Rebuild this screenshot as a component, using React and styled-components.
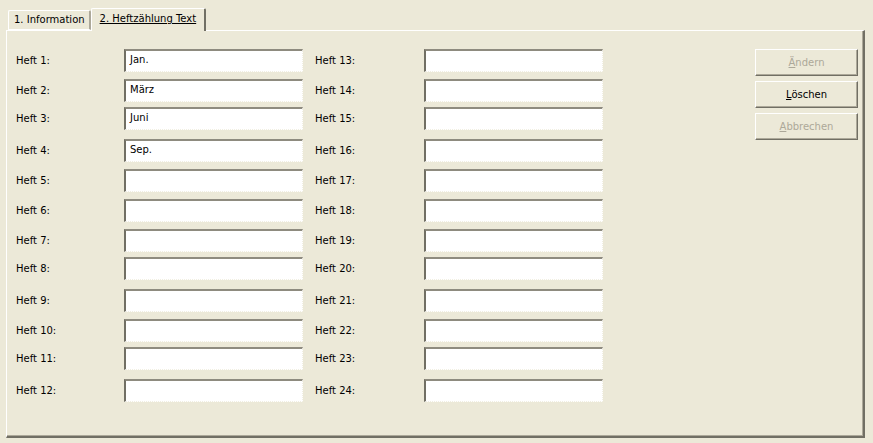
import styled, { createGlobalStyle } from 'styled-components';

const GlobalStyle = createGlobalStyle`
  html, body {
    margin: 0;
    padding: 0;
    background: #ece9d8;
    overflow: hidden;
  }
  * {
    box-sizing: border-box;
  }
`;

const Window = styled.div`
  width: 873px;
  height: 443px;
  background: #ece9d8;
  font-family: 'DejaVu Sans', 'Liberation Sans', sans-serif;
  font-size: 10px;
  color: #000;
`;

const TabStrip = styled.div`
  display: flex;
  align-items: flex-end;
  height: 30px;
  padding-left: 8px;
  position: relative;
  z-index: 1;
`;

const Tab = styled.div`
  height: ${(p) => (p.$active ? '23px' : '20px')};
  padding: ${(p) => (p.$active ? '4px 8px 0 8px' : '3px 4px 0 5px')};
  margin-bottom: ${(p) => (p.$active ? '-1px' : '0')};
  background: #ece9d8;
  border-top: 1px solid #fff;
  border-left: 1px solid #fff;
  border-right: 2px solid ${(p) => (p.$active ? '#716f64' : '#aca899')};
  border-bottom: ${(p) => (p.$active ? 'none' : '1px solid #fff')};
  border-radius: 2px 2px 0 0;
  text-decoration: ${(p) => (p.$active ? 'underline' : 'none')};
  white-space: nowrap;
`;

const Panel = styled.div`
  margin-left: 6px;
  width: 859px;
  height: 408px;
  border-top: 1px solid #fff;
  border-left: 1px solid #fff;
  border-right: 2px solid #716f64;
  border-bottom: 2px solid #716f64;
  box-shadow: inset -1px -1px 0 #aca899;
  display: flex;
  justify-content: space-between;
  padding: 0 5px 0 9px;
`;

const Form = styled.div`
  display: flex;
  flex-direction: column;
  padding-top: 18px;
`;

const Row = styled.div`
  display: flex;
  align-items: center;
  margin-top: ${(p) => p.$gap}px;
`;

const Label = styled.div`
  width: ${(p) => p.$width}px;
`;

const Field = styled.div`
  width: 179px;
  height: 23px;
  background: #fff;
  border-top: 2px solid #8e8b7f;
  border-left: 2px solid #716f64;
  border-right: 1px dotted #f1efe2;
  border-bottom: 1px dotted #f1efe2;
  padding: 1px 0 0 4px;
  line-height: 16px;
  margin-right: ${(p) => (p.$first ? '12px' : '0')};
`;

const Buttons = styled.div`
  display: flex;
  flex-direction: column;
  gap: 5px;
  padding-top: 18px;
`;

const Button = styled.div`
  width: 103px;
  height: 27px;
  display: flex;
  align-items: center;
  justify-content: center;
  background: #ece9d8;
  border-top: 1px solid #fff;
  border-left: 1px solid #fff;
  border-right: 1px solid #716f64;
  border-bottom: 1px solid #716f64;
  box-shadow: inset -1px -1px 0 #aca899;
  color: ${(p) => (p.$disabled ? '#aca899' : '#000')};

  u {
    text-decoration: underline;
  }
`;

const rows = [
  { gap: 0, left: 'Jan.', right: '' },
  { gap: 7, left: 'März', right: '' },
  { gap: 5, left: 'Juni', right: '' },
  { gap: 9, left: 'Sep.', right: '' },
  { gap: 7, left: '', right: '' },
  { gap: 7, left: '', right: '' },
  { gap: 7, left: '', right: '' },
  { gap: 5, left: '', right: '' },
  { gap: 9, left: '', right: '' },
  { gap: 7, left: '', right: '' },
  { gap: 5, left: '', right: '' },
  { gap: 9, left: '', right: '' },
];

function App() {
  return (
    <Window>
      <GlobalStyle />
      <TabStrip>
        <Tab>1. Information</Tab>
        <Tab $active>2. Heftzählung Text</Tab>
      </TabStrip>
      <Panel>
        <Form>
          {rows.map((row, i) => (
            <Row key={i} $gap={row.gap}>
              <Label $width={108}>Heft {i + 1}:</Label>
              <Field $first>{row.left}</Field>
              <Label $width={109}>Heft {i + 13}:</Label>
              <Field>{row.right}</Field>
            </Row>
          ))}
        </Form>
        <Buttons>
          <Button $disabled>
            <span><u>Ä</u>ndern</span>
          </Button>
          <Button>
            <span><u>L</u>öschen</span>
          </Button>
          <Button $disabled>
            <span><u>A</u>bbrechen</span>
          </Button>
        </Buttons>
      </Panel>
    </Window>
  );
}

export default App;
